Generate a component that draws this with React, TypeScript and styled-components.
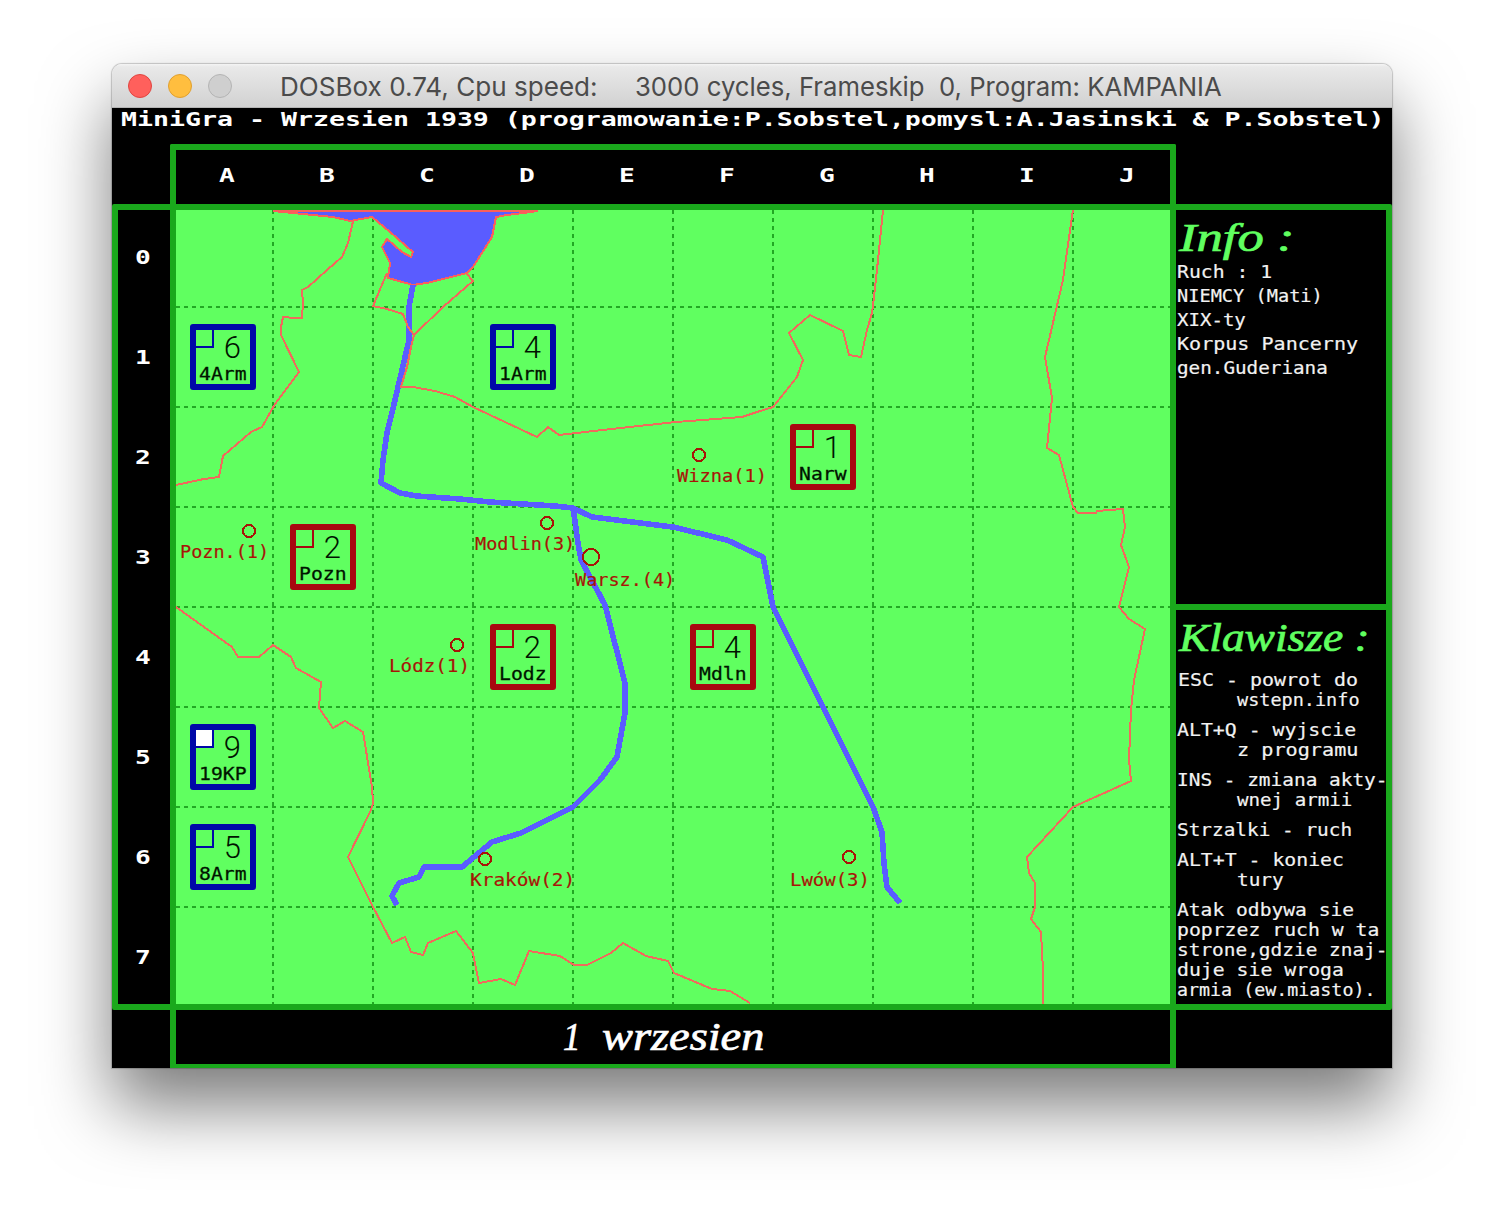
import React, { useLayoutEffect, useRef, useState } from 'react';
import styled, { createGlobalStyle } from 'styled-components';

const GREEN = '#1aa81c';
const FIELD = '#60ff60';
const WATER = '#5a5cff';
const MONO = '"DejaVu Sans Mono", "Liberation Mono", monospace';
const SCRIPT = '"Liberation Serif", "DejaVu Serif", serif';

const GlobalStyle = createGlobalStyle`
  * { box-sizing: border-box; }
  body { margin: 0; background: #fff; overflow: hidden; }
`;

const Desktop = styled.div`
  width: 1504px;
  height: 1228px;
  padding: 64px 112px;
  background: #fff;
`;

const Window = styled.section`
  width: 1280px;
  height: 1004px;
  border-radius: 10px 10px 0 0;
  box-shadow: 0 0 1px 1px rgba(0, 0, 0, 0.2), 0 38px 70px rgba(0, 0, 0, 0.52);
`;

const TitleBar = styled.header`
  display: flex;
  align-items: center;
  height: 44px;
  padding-left: 16px;
  border-radius: 10px 10px 0 0;
  border-bottom: 1px solid #b4b4b4;
  background: linear-gradient(#f4f4f4 0, #e9e9e9 3px, #d1d1d1 100%);
`;

const Lights = styled.div`
  display: flex;
  gap: 16px;
  width: 152px;
`;

const Light = styled.i<{ $fill: string; $edge: string }>`
  width: 24px;
  height: 24px;
  border-radius: 50%;
  border: 1px solid ${p => p.$edge};
  background: ${p => p.$fill};
`;

const TitleText = styled.div`
  display: flex;
  gap: 37px;
  flex: 1;
  padding-top: 2px;
  font: 400 26px/42px Inter, Roboto, sans-serif;
  color: #4b4b4b;
`;

const Screen = styled.main`
  display: grid;
  grid-template-columns: 58px 1006px 216px;
  grid-template-rows: 36px 60px 806px 58px;
  width: 1280px;
  height: 960px;
  background: #000;
  color: #fff;
  font-family: ${MONO};
`;

const Banner = styled.div`
  grid-column: 1 / 4;
  padding-left: 9px;
  font: 700 19px/22px ${MONO};
`;

const Columns = styled.div`
  grid-column: 2;
  grid-row: 2;
  display: grid;
  grid-template-columns: repeat(10, 100px);
  padding-left: 1px;
  border: 6px solid ${GREEN};
  border-bottom: 0;
  border-radius: 2px 2px 0 0;
`;

const Coord = styled.div`
  display: flex;
  align-items: center;
  justify-content: center;
  font: 700 19px/50px ${MONO};
  transform: scaleX(1.38);
`;

const ColumnCoord = styled(Coord)`
  padding-bottom: 4px;
`;

const Main = styled.div`
  grid-column: 1 / 4;
  grid-row: 3;
  display: grid;
  grid-template-columns: 52px 1006px 210px;
  border: 6px solid ${GREEN};
  border-radius: 2px;
`;

const Rows = styled.div`
  display: grid;
  grid-template-rows: repeat(8, 100px);
  width: 50px;
  height: 794px;
  margin-top: -3px;
`;

const Board = styled.div`
  position: relative;
  height: 794px;
  border: solid ${GREEN};
  border-width: 0 6px;
  background: ${FIELD};
`;

const Terrain = styled.svg`
  display: block;
  width: 994px;
  height: 794px;
`;

const City = styled.div<{ $x: number; $y: number }>`
  position: absolute;
  left: ${p => p.$x - 176}px;
  top: ${p => p.$y - 210}px;
  height: 20px;
  font: 400 18.5px/20px ${MONO};
  -webkit-text-stroke: 0.2px;
  color: #a81408;
`;

const Unit = styled.div<{ $col: number; $row: number; $side: string }>`
  position: absolute;
  left: ${p => p.$col * 100 + 14}px;
  top: ${p => p.$row * 100 + 14}px;
  width: 66px;
  height: 66px;
  border: 6px solid ${p => p.$side};
  border-radius: 3px;
  display: grid;
  grid-template-columns: 18px 1fr;
  grid-template-rows: 34px 20px;
  color: #001400;
`;

const Marker = styled.i<{ $side: string; $active?: boolean }>`
  width: 18px;
  height: 18px;
  border: solid ${p => p.$side};
  border-width: 0 2px 2px 0;
  background: ${p => (p.$active ? '#fff' : 'transparent')};
`;

const Strength = styled.b`
  padding: 5px 9px 0 0;
  text-align: right;
  font: 300 31px/25px Roboto, "Open Sans", sans-serif;
`;

const UnitName = styled.div`
  grid-column: 1 / 3;
  padding-left: 3px;
  font: 400 18.5px/20px ${MONO};
  -webkit-text-stroke: 0.3px;
`;

const Side = styled.aside`
  display: grid;
  grid-template-rows: 394px 6px 394px;
`;

const Rule = styled.div`
  background: ${GREEN};
`;

const Panel = styled.div`
  padding-left: 1px;
`;

const Heading = styled.h2<{ $height: number }>`
  height: ${p => p.$height}px;
  margin: 0;
  padding: 5px 0 0 2px;
  font: italic 400 39px/46px ${SCRIPT};
  -webkit-text-stroke: 0.7px;
  color: ${FIELD};
`;

const Line = styled.div<{ $height: number; $indent?: number }>`
  height: ${p => p.$height}px;
  padding-left: ${p => p.$indent ?? 0}px;
  font: 400 18.5px/${p => p.$height}px ${MONO};
  -webkit-text-stroke: 0.2px;
  color: #f2f2f2;
`;

const Entry = styled.div`
  margin-bottom: 10px;
`;

const DateBar = styled.footer`
  grid-column: 2;
  grid-row: 4;
  display: flex;
  gap: 21px;
  padding-left: 387px;
  border: solid ${GREEN};
  border-width: 0 6px 4px;
  font: italic 400 39px/54px ${SCRIPT};
  -webkit-text-stroke: 0.7px;
`;

const Slot = styled.span<{ $width: number }>`
  display: block;
  width: ${p => p.$width}px;
`;

const Stretch = styled.span`
  display: inline-block;
  white-space: pre;
  transform-origin: left center;
  vertical-align: top;
`;

/* Text squeezed or widened to occupy an exact width, like the bitmap fonts of the game. */
function Fit({ width, children }: { width: number; children: string }) {
  const ref = useRef<HTMLSpanElement>(null);
  const [scale, setScale] = useState(1);
  useLayoutEffect(() => {
    if (ref.current) setScale(width / ref.current.offsetWidth);
  }, [width, children]);
  return (
    <Slot $width={width}>
      <Stretch ref={ref} style={{ transform: `scaleX(${scale})` }}>
        {children}
      </Stretch>
    </Slot>
  );
}

const RED = '#a80810';
const BLUE = '#0008a8';

const units = [
  { col: 0, row: 1, side: BLUE, n: '6', name: '4Arm' },
  { col: 3, row: 1, side: BLUE, n: '4', name: '1Arm' },
  { col: 6, row: 2, side: RED, n: '1', name: 'Narw' },
  { col: 1, row: 3, side: RED, n: '2', name: 'Pozn' },
  { col: 3, row: 4, side: RED, n: '2', name: 'Lodz' },
  { col: 5, row: 4, side: RED, n: '4', name: 'Mdln' },
  { col: 0, row: 5, side: BLUE, n: '9', name: '19KP', active: true },
  { col: 0, row: 6, side: BLUE, n: '5', name: '8Arm' },
];

const cities = [
  { name: 'Wizna(1)', x: 677, y: 466, w: 90, cx: 699, cy: 455, r: 6 },
  { name: 'Pozn.(1)', x: 180, y: 542, w: 89, cx: 249, cy: 531, r: 6 },
  { name: 'Modlin(3)', x: 475, y: 534, w: 100, cx: 547, cy: 523, r: 6 },
  { name: 'Warsz.(4)', x: 575, y: 570, w: 100, cx: 591, cy: 557, r: 8 },
  { name: 'Lódz(1)', x: 389, y: 656, w: 81, cx: 457, cy: 645, r: 6 },
  { name: 'Kraków(2)', x: 470, y: 870, w: 105, cx: 485, cy: 859, r: 6 },
  { name: 'Lwów(3)', x: 790, y: 870, w: 80, cx: 849, cy: 857, r: 6 },
];

const borders = [
  '353,221 352,226 348,243 342,257 327,270 308,287 302,290 303,303 302,318 295,318 283,317 281,327 281,335 299,372 275,404 262,427 251,432 223,456 219,477 204,479 176,485',
  '387,273 373,306 387,309 403,314 408,327 414,335',
  '466,273 473,281 443,307 414,335 411,347 407,367 401,387 413,387 435,391 455,397 473,407 537,437 548,427 559,435 620,428 676,422 742,417 757,412 773,407 797,377 803,360 789,333 810,315 843,331 849,355 861,357 867,330 872,313 874,297 878,260 883,210',
  '1073,210 1063,280 1045,357 1052,398 1047,448 1059,455 1073,507 1078,513 1096,513 1097,511 1123,509 1125,527 1121,545 1129,567 1119,607 1129,619 1145,629 1134,680 1131,710 1129,760 1131,781 1073,807 1027,857 1029,873 1035,883 1035,907 1031,919 1041,932 1043,970 1043,1004',
  '176,607 232,647 238,657 259,657 273,645 291,657 296,668 321,682 319,708 333,728 345,721 363,732 372,787 373,803 371,810 348,857 373,907 392,943 405,937 411,952 423,955 428,943 456,931 473,953 479,983 501,979 515,985 529,951 560,956 574,965 587,965 611,953 623,943 646,956 668,961 674,973 712,989 730,991 750,1003',
];

const rivers = [
  '413,285 409,307 409,340 395,400 387,433 383,460 381,483 400,493 417,496 460,499 490,502 555,506 573,508 592,517 673,527 727,540 763,557 773,607 873,807 882,832 884,863 887,887 900,903',
  '573,507 578,543 581,560 605,605 625,683 625,713 617,757 600,780 573,807 521,833 492,842 462,867 424,867 419,877 399,883 392,896 397,905',
];

const sea =
  '273,211 333,217 350,221 372,217 390,232 413,252 411,257 402,252 387,239 382,247 390,263 388,278 413,285 427,283 467,273 473,267 492,237 496,217 507,215 523,213 538,211';

const keys: { text: string; w: number; indent?: number }[][] = [
  [{ text: 'ESC - powrot do', w: 180, indent: 1 }, { text: 'wstepn.info', w: 123, indent: 60 }],
  [{ text: 'ALT+Q - wyjscie', w: 179 }, { text: 'z programu', w: 121, indent: 60 }],
  [{ text: 'INS - zmiana akty-', w: 210 }, { text: 'wnej armii', w: 115, indent: 60 }],
  [{ text: 'Strzalki - ruch', w: 175 }],
  [{ text: 'ALT+T - koniec', w: 167 }, { text: 'tury', w: 47, indent: 60 }],
  [
    { text: 'Atak odbywa sie', w: 177 },
    { text: 'poprzez ruch w ta', w: 202 },
    { text: 'strone,gdzie znaj-', w: 210 },
    { text: 'duje sie wroga', w: 167 },
    { text: 'armia (ew.miasto).', w: 198 },
  ],
];

const info = [
  { text: 'Ruch : 1', w: 95 },
  { text: 'NIEMCY (Mati)', w: 146 },
  { text: 'XIX-ty', w: 69 },
  { text: 'Korpus Pancerny', w: 181 },
  { text: 'gen.Guderiana', w: 151 },
];

function MapDrawing() {
  return (
    <Terrain viewBox="176 210 994 794" shapeRendering="crispEdges" fill="none">
      <g stroke="#22a824" strokeWidth="2" strokeDasharray="4 4">
        {Array.from({ length: 9 }, (_, i) => (
          <line key={i} x1={273 + i * 100} x2={273 + i * 100} y1="210" y2="1004" />
        ))}
        {Array.from({ length: 7 }, (_, i) => (
          <line key={i} x1="176" x2="1170" y1={307 + i * 100} y2={307 + i * 100} />
        ))}
      </g>
      <polygon points={sea} fill={WATER} stroke="#fa5f5c" strokeWidth="2" />
      <g stroke={WATER} strokeWidth="5.6" strokeLinejoin="round">
        {rivers.map(p => (
          <polyline key={p} points={p} />
        ))}
      </g>
      <g stroke="#f06a5c" strokeWidth="2">
        {borders.map(p => (
          <polyline key={p} points={p} />
        ))}
      </g>
      <g stroke="#a81408" strokeWidth="2">
        {cities.map(c => (
          <circle key={c.name} cx={c.cx} cy={c.cy} r={c.r} />
        ))}
      </g>
    </Terrain>
  );
}

export default function App() {
  return (
    <Desktop>
      <GlobalStyle />
      <Window>
        <TitleBar>
          <Lights>
            <Light $fill="#ff605c" $edge="#e04540" />
            <Light $fill="#ffbe3f" $edge="#e0a030" />
            <Light $fill="#cfcfcf" $edge="#b4b4b4" />
          </Lights>
          <TitleText>
            <Fit width={318}>DOSBox 0.74, Cpu speed:</Fit>
            <Fit width={587}>3000 cycles, Frameskip  0, Program: KAMPANIA</Fit>
          </TitleText>
        </TitleBar>
        <Screen>
          <Banner>
            <Fit width={1264}>MiniGra - Wrzesien 1939 (programowanie:P.Sobstel,pomysl:A.Jasinski &amp; P.Sobstel)</Fit>
          </Banner>
          <Columns>
            {[...'ABCDEFGHIJ'].map(c => (
              <ColumnCoord key={c}>{c}</ColumnCoord>
            ))}
          </Columns>
          <Main>
            <Rows>
              {[...'01234567'].map(r => (
                <Coord key={r}>{r}</Coord>
              ))}
            </Rows>
            <Board>
              <MapDrawing />
              {cities.map(c => (
                <City key={c.name} $x={c.x} $y={c.y}>
                  <Fit width={c.w}>{c.name}</Fit>
                </City>
              ))}
              {units.map(u => (
                <Unit key={u.name} $col={u.col} $row={u.row} $side={u.side}>
                  <Marker $side={u.side} $active={u.active} />
                  <Strength>{u.n}</Strength>
                  <UnitName>
                    <Fit width={48}>{u.name}</Fit>
                  </UnitName>
                </Unit>
              ))}
            </Board>
            <Side>
              <Panel>
                <Heading $height={50}>
                  <Fit width={116}>Info :</Fit>
                </Heading>
                {info.map(l => (
                  <Line key={l.text} $height={24}>
                    <Fit width={l.w}>{l.text}</Fit>
                  </Line>
                ))}
              </Panel>
              <Rule />
              <Panel>
                <Heading $height={60}>
                  <Fit width={191}>Klawisze :</Fit>
                </Heading>
                {keys.map(group => (
                  <Entry key={group[0].text}>
                    {group.map(l => (
                      <Line key={l.text} $height={20} $indent={l.indent}>
                        <Fit width={l.w}>{l.text}</Fit>
                      </Line>
                    ))}
                  </Entry>
                ))}
              </Panel>
            </Side>
          </Main>
          <DateBar>
            <Fit width={18}>1</Fit>
            <Fit width={163}>wrzesien</Fit>
          </DateBar>
        </Screen>
      </Window>
    </Desktop>
  );
}
